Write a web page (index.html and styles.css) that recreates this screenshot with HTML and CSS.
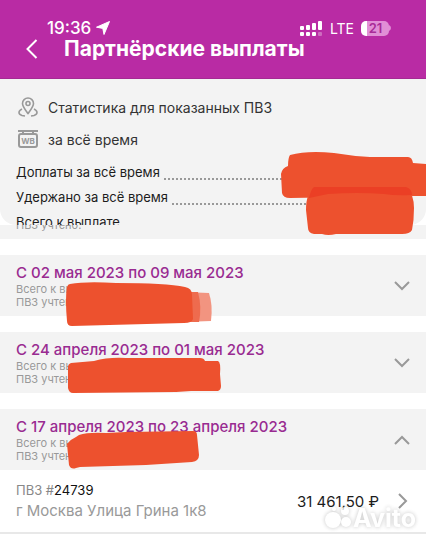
FILE: index.html
```
<!DOCTYPE html>
<html lang="ru">
<head>
  <meta charset="UTF-8">
  <meta name="viewport" content="width=device-width, initial-scale=1.0">
  <title>Партнёрские выплаты</title>
  <link rel="stylesheet" href="styles.css">
</head>
<body>
  <header class="header">
    <div class="status-bar">
      <span class="time">19:36</span>
      <svg class="location" width="14" height="14" viewBox="0 0 14 14"><path d="M13.5 0.5 L8 13.5 L6.8 7.4 L0.5 6.2 Z" fill="#fff" stroke="#fff" stroke-linejoin="round"/></svg>
      <svg class="signal" width="22" height="15" viewBox="0 0 22 15" fill="#fff">
        <rect x="0" y="5" width="4" height="4" rx="1"/><rect x="6" y="4" width="4" height="5" rx="1"/><rect x="12" y="2" width="4" height="7" rx="1"/><rect x="18" y="0" width="4" height="9" rx="1"/>
        <rect x="0" y="11" width="4" height="4" rx="1"/><rect x="6" y="11" width="4" height="4" rx="1"/><rect x="12" y="11" width="4" height="4" rx="1"/><rect x="18" y="11" width="4" height="4" rx="1" opacity="0.3"/>
      </svg>
      <span class="network">LTE</span>
      <span class="battery">21</span>
      <svg width="2" height="6" viewBox="0 0 2 6"><path d="M0 0 Q2 1 2 3 Q2 5 0 6 Z" fill="#e18fd6"/></svg>
    </div>
    <div class="title-bar">
      <button class="back" aria-label="Назад">
        <svg width="12" height="20" viewBox="0 0 12 20"><path d="M10.5 1 L1.5 10 L10.5 19" fill="none" stroke="#fff" stroke-width="2"/></svg>
      </button>
      <h1>Партнёрские выплаты</h1>
    </div>
  </header>

  <main>
    <section class="summary">
      <div class="filter">
        <svg width="20" height="20" viewBox="0 0 20 20" fill="none" stroke="#999" stroke-width="1.6">
          <path d="M10 16.5 C7 12.5 4.5 9.500 4.500 6.500 A5.500 5.500 0 0 1 15.500 6.500 C15.500 9.500 13 12.500 10 16.500 Z"/>
          <circle cx="10" cy="6.500" r="2"/>
          <path d="M4 12 C0 14 0 17 4 18.500 L7 19 M16 12 C20 14 20 17 16 18.500 L13 19"/>
        </svg>
        <span>Статистика для показанных ПВЗ</span>
      </div>
      <div class="filter">
        <svg width="20" height="20" viewBox="0 0 20 20">
          <path d="M0 2 H20 M5 2 V5 M15 2 V5" stroke="#999" stroke-width="2"/>
          <rect x="1" y="5" width="18" height="13" rx="2" fill="none" stroke="#999" stroke-width="2"/>
          <text class="sign-text" x="10" y="15" text-anchor="middle">WB</text>
        </svg>
        <span>за всё время</span>
      </div>
      <div class="total"><span>Доплаты за всё время</span><i class="dots"></i></div>
      <div class="total"><span>Удержано за всё время</span><i class="dots"></i></div>
      <div class="total"><span>Всего к выплате</span></div>
    </section>

    <!-- hidden amounts of the summary -->
    <svg class="marker marker-summary" width="148" height="88" viewBox="0 0 148 88" fill="#ed512e">
      <path d="M12 5 Q30 0 56 3 Q74 6 92 7 H130 Q134 7 135 13 L148 14 V46 H134 L12 48 Q5 48 4 43 L3 24 Q4 18 10 16 Q10 8 12 5 Z"/>
      <path d="M37 37 H129 Q136 45 136 58 Q136 70 134 80 Q132 84 124 84 L58 84 Q50 86 44 84 L36 84 Q30 83 30 78 L28 60 Q28 42 37 37 Z"/>
      <path d="M36 37 H128 Q134 39 134 45 Q118 46 106 44 Q80 42 50 44 L31 48 Q33 39 36 37 Z" fill="#eb3f25"/>
    </svg>

    <div class="peek"><p>ПВЗ учтено:</p></div>

    <article class="period">
      <div>
        <h2>С 02 мая 2023 по 09 мая 2023</h2>
        <p>Всего к выплате:</p>
        <p>ПВЗ учтено:</p>
      </div>
      <button class="toggle" aria-label="Развернуть">
        <svg width="16" height="10" viewBox="0 0 16 10"><path d="M1 1 L8 8 L15 1" fill="none" stroke="#999" stroke-width="2"/></svg>
      </button>
      <svg class="marker" width="158" height="48" viewBox="0 0 158 48">
        <path d="M118 13 L143 14 Q147 26 145 42 L118 43 Z" fill="#f29480"/>
        <path d="M118 13 H132 Q136 28 133 43 H118 Z" fill="#ee6b4e"/>
        <path d="M4 5 Q20 2 50 4 Q100 4 119 8 Q126 9 126 16 L127 40 Q126 44 118 44 L6 47 Q1 47 1 42 Q-1 20 1 8 Q2 5 4 5 Z" fill="#ed512e"/>
      </svg>
    </article>

    <article class="period">
      <div>
        <h2>С 24 апреля 2023 по 01 мая 2023</h2>
        <p>Всего к выплате:</p>
        <p>ПВЗ учтено:</p>
      </div>
      <button class="toggle" aria-label="Развернуть">
        <svg width="16" height="10" viewBox="0 0 16 10"><path d="M1 1 L8 8 L15 1" fill="none" stroke="#999" stroke-width="2"/></svg>
      </button>
      <svg class="marker" width="158" height="48" viewBox="0 0 158 48">
        <path d="M5 7 L28 5 Q42 1 60 2 L134 2 Q138 2 139 5 L152 5 Q155 6 154 18 L155 30 Q155 34 152 35 L125 35 L110 36 L7 37 Q3 37 2 32 L2 11 Q2 8 5 7 Z" fill="#ed512e"/>
      </svg>
    </article>

    <article class="period open">
      <div>
        <h2>С 17 апреля 2023 по 23 апреля 2023</h2>
        <p>Всего к выплате:</p>
        <p>ПВЗ учтено:</p>
      </div>
      <button class="toggle" aria-label="Свернуть">
        <svg width="16" height="10" viewBox="0 0 16 10"><path d="M1 9 L8 2 L15 9" fill="none" stroke="#999" stroke-width="2"/></svg>
      </button>
      <svg class="marker" width="158" height="48" viewBox="0 0 158 48">
        <path d="M13 2 Q22 -1 40 0 L60 -1 L127 -2 Q131 -2 131 2 L133 22 Q133 28 126 29 L80 32 L14 34 L10 35 Q5 37 3 32 L1 11 Q5 6 10 4 Z" fill="#ed512e"/>
      </svg>
    </article>

    <a class="point" href="#24739">
      <div class="point-info">
        <p class="number">ПВЗ #<b>24739</b></p>
        <p class="address">г Москва Улица Грина 1к8</p>
      </div>
      <span class="amount">31 461,50 ₽</span>
      <svg width="10" height="16" viewBox="0 0 10 16"><path d="M1 1 L8 8 L1 15" fill="none" stroke="#999" stroke-width="2"/></svg>
    </a>
  </main>

  <div class="watermark">
    <svg width="28" height="24" viewBox="0 0 28 24" fill="#fff">
      <circle cx="8" cy="14" r="8"/><circle cx="21" cy="16" r="5"/><circle cx="9" cy="3" r="2"/><circle cx="20" cy="5" r="4"/>
    </svg>
    <span>Avito</span>
  </div>
</body>
</html>
```
FILE: styles.css
```
* {
  box-sizing: border-box;
}

body {
  position: relative;
  margin: 0;
  background: #fff;
  color: #1c1c1c;
  font-family: Inter, "Liberation Sans", sans-serif;
}

h1, h2, p {
  margin: 0;
}

button {
  padding: 0;
  border: none;
  background: none;
  cursor: pointer;
}

svg {
  display: block;
  flex: none;
}

.header {
  padding: 18px 35px 18px 26px;
  background: #b92ba4;
  border-bottom: 1px solid #a52a93;
  color: #fff;
}

.status-bar {
  display: flex;
  align-items: center;
  height: 20px;
  padding-left: 21px;
}

.time {
  font-size: 17px;
  font-weight: 500;
}

.location {
  margin-left: 5px;
}

.signal {
  margin-left: auto;
}

.network {
  margin-left: 8px;
  font-size: 14px;
}

.battery {
  width: 28px;
  margin-left: 7px;
  padding-left: 1px;
  border-radius: 5px;
  background: linear-gradient(to right, #fff 6px, #e18fd6 6px);
  color: #a92b98;
  font-size: 13px;
  font-weight: 600;
  line-height: 15px;
  text-align: center;
}

.title-bar {
  display: flex;
  align-items: center;
  height: 22px;
}

.title-bar h1 {
  margin-left: 26px;
  font-size: 21px;
  font-weight: 700;
  line-height: 22px;
  white-space: nowrap;
}

.summary {
  height: 146px;
  padding: 12px 16px 0;
  overflow: hidden;
  border-radius: 0 0 16px 16px;
  background: #f3f3f3;
}

.filter {
  display: flex;
  align-items: center;
  gap: 10px;
  height: 32px;
  padding-left: 2px;
  color: #333;
  font-size: 14px;
}

.total {
  display: flex;
  align-items: flex-end;
  gap: 4px;
  height: 25px;
  font-size: 13px;
  line-height: 16px;
}

.dots {
  flex: 1;
  border-bottom: 2px dotted #999;
}

.marker {
  position: absolute;
  top: 24px;
  left: 66px;
  overflow: visible;
}

.marker-summary {
  top: 150px;
  right: 0;
  left: auto;
}

.peek {
  height: 14px;
  padding-left: 16px;
  overflow: hidden;
  background: #f3f3f3;
}

.peek p {
  margin-top: -6px;
}

.peek p,
.period p {
  color: #999;
  font-size: 11px;
  line-height: 13px;
}

.period {
  position: relative;
  display: flex;
  align-items: center;
  justify-content: space-between;
  height: 61px;
  margin-top: 16px;
  padding: 0 16px;
  background: #f3f3f3;
}

.period h2 {
  color: #992b91;
  font-size: 15px;
  font-weight: 500;
  line-height: 20px;
}

.point {
  display: flex;
  align-items: center;
  height: 64px;
  padding: 0 18px 0 16px;
  border-bottom: 2px solid #e8e8e8;
  color: #1c1c1c;
  text-decoration: none;
}

.point-info {
  flex: 1;
}

.number {
  color: #888;
  font-size: 13px;
  line-height: 20px;
}

.number b {
  color: #111;
  font-weight: 400;
}

.address {
  color: #999;
  font-size: 15px;
  line-height: 22px;
}

.amount {
  margin-right: 19px;
  font-size: 15px;
}

.watermark {
  position: absolute;
  top: 505px;
  right: 10px;
  display: flex;
  align-items: center;
  color: #fff;
  font-size: 25px;
  font-weight: 700;
  line-height: 26px;
  opacity: 0.75;
  filter: drop-shadow(0 0 2px rgba(0, 0, 0, 0.3));
  pointer-events: none;
}

.sign-text {
  fill: #999;
  font-size: 8px;
  font-weight: 700;
}
```
